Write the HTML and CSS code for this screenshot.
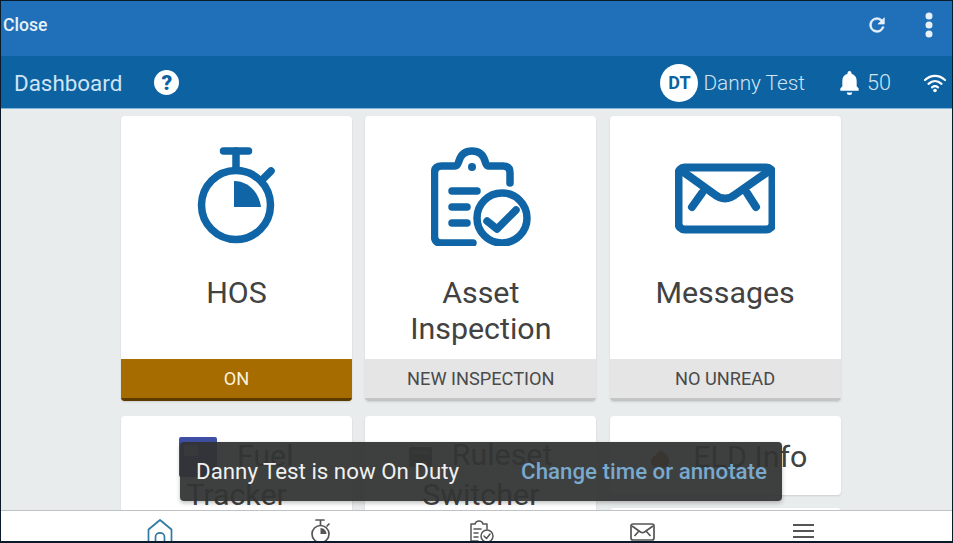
FILE: index.html
```html
<!DOCTYPE html>
<html lang="en">
<head>
<meta charset="utf-8">
<title>Dashboard</title>
<link rel="stylesheet" href="styles.css">
</head>
<body>
<div class="app">
  <header class="topbar">
    <span class="close">Close</span>
    <div class="top-actions">
      <svg class="refresh" viewBox="0 0 24 24" width="22" height="22"><path fill="#e8f1f8" stroke="#e8f1f8" stroke-width=".7" d="M17.65 6.35A7.96 7.96 0 0 0 12 4a8 8 0 1 0 7.73 10h-2.08A6 6 0 1 1 12 6c1.66 0 3.14.69 4.22 1.78L13 11h7V4l-2.35 2.35z"/></svg>
      <svg class="kebab" viewBox="0 0 8 26" width="8" height="26"><circle cx="4" cy="4" r="3.500" fill="#e8f1f8"/><circle cx="4" cy="13" r="3.500" fill="#e8f1f8"/><circle cx="4" cy="22" r="3.500" fill="#e8f1f8"/></svg>
    </div>
  </header>
  <div class="subbar">
    <span class="title">Dashboard</span>
    <span class="help">?</span>
    <div class="sub-right">
      <span class="avatar">DT</span>
      <span class="user">Danny Test</span>
      <svg class="bell" viewBox="4.200 1.600 15.600 20.400" width="21" height="24"><path fill="#fff" d="M12 22a2.400 2.400 0 0 0 2.400-2.200H9.600A2.400 2.400 0 0 0 12 22zM19.800 16.500l-1.700-2V10c0-3-1.700-5.300-4.400-6V3.300a1.700 1.700 0 0 0-3.400 0V4C7.600 4.700 5.900 7 5.900 10v4.500l-1.700 2v1.800h15.600z"/></svg>
      <span class="count">50</span>
      <svg class="wifi" viewBox="0 0 24 20" width="24" height="20" fill="none" stroke="#fff" stroke-width="2.200" stroke-linecap="round"><path d="M2 7C8 1.500 16 1.500 22 7"/><path d="M5.500 10.800C9.500 7.300 14.500 7.300 18.500 10.800"/><path d="M9 14.300C11 12.800 13 12.800 15 14.300"/><circle cx="12" cy="17.500" r="1.800" fill="#fff" stroke="none"/></svg>
    </div>
  </div>
  <main class="content">
    <div class="grid">
      <section class="card card-tall">
        <div class="card-body">
          <svg class="icon" viewBox="1 0 80 100" width="80" height="100" fill="none" stroke="#0f65a5" stroke-width="7.500" stroke-linecap="round">
            <path d="M27.500 5H52.500"/>
            <path d="M40 5V22"/>
            <path d="M66 34L75 25"/>
            <circle cx="40" cy="59" r="34.500"/>
            <path d="M38 35C52 35 63 46 65 61H38z" fill="#0f65a5" stroke="none"/>
          </svg>
          <h2 class="label">HOS</h2>
        </div>
        <div class="status status-on">ON</div>
      </section>
      <section class="card card-tall">
        <div class="card-body">
          <svg class="icon" viewBox="0 0 100 100" width="100" height="100" fill="none" stroke="#0f65a5" stroke-width="7.500" stroke-linecap="round" stroke-linejoin="round">
            <path d="M42 97H10Q3.500 97 3.500 90V27Q3.500 20 10.500 20H24C27 20 27 17 28 15C30 8 35 5 41 5C47 5 52 8 54 15C55 18 55 20 58 20H72Q79 20 79 27V37"/>
            <circle cx="41" cy="21" r="4" fill="#0f65a5" stroke="none"/>
            <path d="M21 45H46M21 61H36M21 77H36"/>
            <circle cx="71" cy="72" r="25"/>
            <path d="M56 75L66 83L85 64"/>
          </svg>
          <h2 class="label">Asset Inspection</h2>
        </div>
        <div class="status">NEW INSPECTION</div>
      </section>
      <section class="card card-tall">
        <div class="card-body">
          <svg class="icon" viewBox="0 0 100 100" width="100" height="100" fill="none" stroke="#0f65a5" stroke-width="8" stroke-linecap="round" stroke-linejoin="round">
            <rect x="3.500" y="21.500" width="94" height="62" rx="6"/>
            <path d="M7 25L39 48C46 54 54 54 61 48L94 25"/>
            <path d="M27 47L17 61M72 47L81 61"/>
          </svg>
          <h2 class="label">Messages</h2>
        </div>
        <div class="status">NO UNREAD</div>
      </section>
      <section class="card card-small">
        <h2 class="label-inline">
          <svg class="mini" viewBox="0 0 38 40" width="38" height="40"><rect width="38" height="40" rx="2" fill="#3f4fa3"/><rect x="5" y="8" width="14" height="11" fill="#8d93b8"/></svg>
          Fuel Tracker
        </h2>
      </section>
      <section class="card card-small">
        <h2 class="label-inline label-rule">
          <svg class="mini-rule" viewBox="0 0 23 20" width="23" height="20"><rect width="23" height="20" rx="2" fill="#5a5a5a"/><rect x="3" y="4" width="17" height="3" fill="#8a8a8a"/></svg>
          Ruleset Switcher
        </h2>
      </section>
      <div class="stack">
        <section class="card card-short">
          <h2 class="label-inline label-eld">
            <svg class="mini-eld" viewBox="0 0 22 18" width="22" height="18"><path d="M11 0C17 3 21 8 20 13C19 17 15 18 11 18C6 18 2 16 2 12C2 7 8 5 11 0z" fill="#a8541c"/></svg>
            ELD Info
          </h2>
        </section>
        <section class="card card-next"></section>
      </div>
    </div>
  </main>
  <div class="toast">
    <span class="toast-text">Danny Test is now On Duty</span>
    <span class="toast-action">Change time or annotate</span>
  </div>
  <nav class="bottomnav">
    <svg viewBox="0 0 26 24" width="26" height="24" fill="none" stroke="#2f7a9e" stroke-width="1.700" stroke-linejoin="round"><path d="M1.500 24V10.500L13 1L24.500 10.500V24"/><path d="M8.500 24V18C8.500 12.500 17.500 12.500 17.500 18V24"/></svg>
    <svg class="nav-down" viewBox="0 0 20 24" width="20" height="24" fill="none" stroke="#555" stroke-width="1.700" stroke-linecap="round"><path d="M5 1H13M9.500 1V6M16 7L18 5"/><circle cx="9.500" cy="15" r="8.500"/><path d="M9.500 9C13 9 15.500 12 15.500 15H9.500z" fill="#555" stroke="none"/></svg>
    <svg class="nav-down" viewBox="0 0 25 24" width="25" height="24" fill="none" stroke="#555" stroke-width="1.500" stroke-linecap="round" stroke-linejoin="round"><path d="M9 22H2V5H6C7 1 13 1 14 5H18V10"/><path d="M5 10H12M5 14H9M5 18H9"/><circle cx="18" cy="17" r="6"/><path d="M15 17L17.500 19.500L21 15"/></svg>
    <svg class="nav-mail" viewBox="0 0 25 18" width="25" height="18" fill="none" stroke="#555" stroke-width="1.700" stroke-linejoin="round"><rect x="1" y="1" width="23" height="16" rx="2"/><path d="M2 3L10.500 9C12 10 13 10 14.500 9L23 3M9 8L4.500 13M16 8L20.500 13"/></svg>
    <span class="burger"><i></i><i></i><i></i></span>
  </nav>
</div>
</body>
</html>
```
FILE: styles.css
```css
* { box-sizing: border-box; }
html, body { margin: 0; padding: 0; height: 100%; background: #0a1420; }
body { font-family: Roboto, "Noto Sans", sans-serif; overflow: hidden; }
.app {
  position: relative;
  width: 953px;
  height: 543px;
  border: 1px solid #0b1a2a;
  border-bottom-width: 2px;
  display: flex;
  flex-direction: column;
  overflow: hidden;
  background: #e9eced;
}
.topbar {
  flex: 0 0 55px;
  background: #2070b9;
  display: flex;
  align-items: center;
  justify-content: space-between;
  padding: 0 19px 8px 2px;
  color: #e8f1f8;
}
.close { font-size: 17.600px; font-weight: 500; }
.top-actions { display: flex; align-items: center; gap: 37px; }
.refresh { display: block; }
.kebab { display: block; }
.subbar {
  flex: 0 0 53px;
  background: #0d62a2;
  border-bottom: 1px solid #7fb6da;
  display: flex;
  align-items: center;
  padding: 1px 5px 0 13px;
  color: #cfe4f4;
}
.title { font-size: 22.400px; }
.help {
  width: 25px;
  height: 25px;
  margin-left: 32px;
  border-radius: 50%;
  background: #fff;
  color: #0d62a2;
  font-weight: 900;
  font-size: 21px;
  display: flex;
  align-items: center;
  justify-content: center;
}
.sub-right { margin-left: auto; display: flex; align-items: center; }
.avatar {
  width: 38px;
  height: 38px;
  border-radius: 50%;
  background: #fff;
  color: #0d62a2;
  font-weight: 700;
  font-size: 18px;
  display: flex;
  align-items: center;
  justify-content: center;
}
.user { font-size: 20.800px; font-weight: 300; margin-left: 5px; }
.bell { margin-left: 34px; }
.count { font-size: 21.600px; font-weight: 300; margin-left: 7px; }
.wifi { margin-left: 32px; }
.content { flex: 1 1 auto; min-height: 0; overflow: hidden; padding: 7px 0 0 120px; }
.grid {
  display: grid;
  grid-template-columns: repeat(3, 231px);
  grid-template-rows: 285px 120px;
  column-gap: 13.300px;
  row-gap: 15px;
  align-items: start;
}
.card {
  background: #fff;
  border-radius: 4px;
  display: flex;
  flex-direction: column;
  overflow: hidden;
  box-shadow: 0 1px 2px rgba(0,0,0,.12);
}
.card-tall { height: 285px; }
.card-body {
  flex: 1 1 auto;
  display: flex;
  flex-direction: column;
  align-items: center;
  padding-top: 30px;
}
.icon { flex: none; display: block; }
.label {
  margin: 0;
  font-size: 30.400px;
  font-weight: 400;
  line-height: 36px;
  color: #424242;
  text-align: center;
  padding: 29px 30px 0;
}
.status {
  flex: 0 0 42px;
  background: #e5e5e5;
  color: #4a4a4a;
  font-size: 18.200px;
  display: flex;
  align-items: center;
  justify-content: center;
  border-bottom: 3px solid #c2c4c5;
}
.status-on { background: #a66c00; color: #fbf2dd; border-bottom-color: #5b3b00; }
.card-small { height: 120px; }
.label-inline {
  margin: 0;
  padding: 21px 30px 0;
  font-size: 30.400px;
  font-weight: 400;
  line-height: 36px;
  color: #424242;
  text-align: center;
}
.mini { vertical-align: -11px; margin-right: 12px; }
.mini-rule { vertical-align: middle; margin-right: 12px; margin-top: 10px; margin-bottom: 10px; }
.label-rule { padding: 21px 10px 0; }
.stack { display: flex; flex-direction: column; gap: 13px; }
.card-short { height: 79px; }
.label-eld { padding: 23px 0 0 6px; }
.mini-eld { vertical-align: middle; margin-right: 15px; }
.card-next { height: 40px; }
.toast {
  position: absolute;
  left: 179px;
  top: 441px;
  width: 602px;
  height: 59px;
  background: rgba(50,51,51,.94);
  border-radius: 4px;
  display: flex;
  align-items: center;
  justify-content: space-between;
  padding: 0 15px 2px 16px;
  font-size: 22.300px;
  box-shadow: 0 2px 4px rgba(0,0,0,.25);
}
.toast-text { color: #f0f0f0; }
.toast-action { color: #79a9cd; font-weight: 500; }
.bottomnav {
  position: relative;
  flex: 0 0 31px;
  background: #fff;
  border-top: 1px solid #bfc2c4;
  display: grid;
  grid-template-columns: repeat(5, 161px);
  justify-items: center;
  align-items: start;
  padding: 8px 0 0 78px;
  overflow: hidden;
}
.bottomnav svg { display: block; }
.nav-mail { margin-top: 4px; }
.burger { display: flex; flex-direction: column; gap: 4px; width: 21px; padding-top: 5px; }
.burger i { display: block; height: 2px; background: #555; }
```
